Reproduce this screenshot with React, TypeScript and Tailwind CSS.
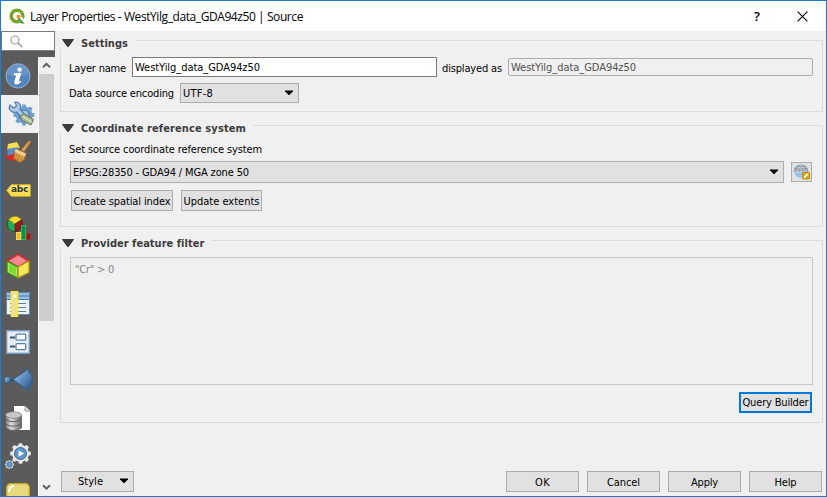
import { useLayoutEffect, useRef, useState } from 'react';
import type { ReactNode } from 'react';

/* One line of text, tracked so that it fills the given width. */
function Fit({ text, w, className = '' }: { text: string; w: number; className?: string }) {
  const ref = useRef<HTMLSpanElement>(null);
  const [spacing, setSpacing] = useState(0);
  useLayoutEffect(() => {
    if (ref.current) {
      const natural = ref.current.getBoundingClientRect().width;
      setSpacing((w - natural) / text.length);
    }
  }, []);
  return (
    <span ref={ref} className={'inline-block shrink-0 translate-y-px whitespace-pre ' + className} style={{ letterSpacing: spacing + 'px' }}>
      {text}
    </span>
  );
}

function Caret() {
  return (
    <svg width="8" height="5" viewBox="0 0 8 5" className="shrink-0 -translate-y-px">
      <path d="M0 0.5H8V1.3L4.4 5H3.6L0 1.3Z" fill="#000" />
    </svg>
  );
}

function Button({ text, w, className = '' }: { text: string; w: number; className?: string }) {
  return (
    <button className={'flex h-[21px] shrink-0 items-center justify-center border border-[#adadad] bg-[#e1e1e1] ' + className}>
      <Fit text={text} w={w} className="leading-[17px]" />
    </button>
  );
}

function Group({ title, w, className, children }: { title: string; w: number; className: string; children: ReactNode }) {
  return (
    <section className={'flex w-[763px] shrink-0 flex-col ' + className}>
      <div className="flex h-[9px]">
        <svg width="12" height="8" viewBox="0 0 12 8" className="-mt-px ml-[2px] shrink-0">
          <path d="M0.5 0.5H11.5L6.5 7.5H5.5Z" fill="#3c3c3c" stroke="#222" strokeWidth=".8" />
        </svg>
        <h2 className="-mt-[5px] ml-[7px] flex h-[16px] shrink-0 font-bold leading-[16px] text-[#3c3c3c]">
          <Fit text={title} w={w} />
        </h2>
        <div className="ml-[7px] flex-1 border-r border-t border-[#dcdcdc]" />
      </div>
      <div className="flex flex-1 flex-col border-x border-b border-[#dcdcdc]">{children}</div>
    </section>
  );
}

const toothAngles = [0, 45, 90, 135, 180, 225, 270, 315];

function Gear({ cx, cy, r, fill, tooth }: { cx: number; cy: number; r: number; fill: string; tooth: number }) {
  return (
    <g fill={fill}>
      <circle cx={cx} cy={cy} r={r} />
      {toothAngles.map((a) => (
        <rect key={a} x={cx - tooth / 2} y={cy - r - tooth / 2} width={tooth} height={tooth} rx=".7" transform={`rotate(${a} ${cx} ${cy})`} />
      ))}
    </g>
  );
}

function InfoIcon() {
  return (
    <svg width="26" height="26" viewBox="0 0 26 26">
      <circle cx="13" cy="13" r="12" fill="#5486bd" stroke="#94b5d8" strokeWidth="1" />
      <path d="M2 11A11 11 0 0 1 24 11Q13 16 2 11Z" fill="#7aa1cf" opacity=".55" />
      <circle cx="14.6" cy="6.6" r="2.2" fill="#fff" />
      <path d="M9 10.4L16.3 9.8L13.8 18.2Q13.6 19.4 16 17.6L16.4 18.6Q13.8 21.6 10.8 21.4Q8.6 20.8 9.4 18.2L11.1 12.4L8.8 12Z" fill="#fff" />
    </svg>
  );
}

function ToolsIcon() {
  return (
    <svg width="28" height="28" viewBox="0 0 28 28">
      <Gear cx={17} cy={15} r={8.4} fill="#6f9fd3" tooth={4} />
      <circle cx="17" cy="15" r="5" fill="#a9c8e6" stroke="#4777ab" />
      <path d="M3 5L6.5 8L9.5 6L8 2Q13 2 13.5 6.5L13 9.5L18 14.5L14.5 17.5L10 12Q4 13.5 2 8Z" fill="#aecae6" stroke="#4d7ba9" strokeWidth="1.1" />
      <path d="M13 16L17 13.5L26.5 19.5L24 25L15 20.5Z" fill="#a9b993" stroke="#5d7257" strokeWidth="1" />
      <path d="M16 16.5L24.5 22" stroke="#d5ddc4" strokeWidth="1.5" />
    </svg>
  );
}

function BrushIcon() {
  return (
    <svg width="28" height="28" viewBox="0 0 28 28">
      <path d="M4 6L13 4L16 10L3 12Z" fill="#f4df52" />
      <path d="M3 11L14 9L15 16L4 18Z" fill="#5c8cc3" />
      <path d="M2.5 18L13 15L15 23L6 22L2.5 20Z" fill="#e52420" />
      <path d="M17 12L24.5 3Q27.2 2 26.6 4.6L20 14Z" fill="#d6a260" stroke="#a56827" />
      <path d="M11.5 11L22 15.5L20 22L15.5 24.5L9.5 20Z" fill="#dca14c" stroke="#a7671f" />
      <path d="M11.5 11L22 15.5L21 18.5L10.8 14Z" fill="#efd19b" />
      <path d="M12.5 16L11.5 20M15 17.5L13.5 22M17.5 19L15.5 23.5" stroke="#a7671f" strokeWidth=".8" />
    </svg>
  );
}

function LabelIcon() {
  return (
    <div className="relative h-[13px] w-[25px]">
      <svg width="25" height="13" viewBox="0 0 25 13" className="block">
        <path d="M.6 6.5L5 1Q5.5.6 6 .6H24.4V12.4H6Q5.5 12.4 5 12Z" fill="#f7dc55" stroke="#c9a51c" />
        <path d="M2 6L5.5 1.6H23.4V5H6Z" fill="#fff1a0" opacity=".7" />
      </svg>
      <span className="absolute left-[5px] top-[-1px] font-['DejaVu_Sans'] text-[9px] font-bold leading-[13px] tracking-[-0.3px] text-[#30352c] [font-stretch:normal]">abc</span>
    </div>
  );
}

function DiagramIcon() {
  return (
    <svg width="26" height="26" viewBox="0 0 26 26">
      <circle cx="9" cy="9" r="7.6" fill="#24ad59" stroke="#166334" />
      <path d="M9 9L2.6 4.6Q9-2 15.4 4.6Z" fill="#f7dc28" stroke="#a4891b" strokeWidth=".7" />
      <path d="M9 9L15.6 5Q18.5 11 12 16L9 16.5Z" fill="#951a1c" stroke="#681012" strokeWidth=".7" />
      <rect x="10.5" y="17.5" width="4" height="7" fill="#f4b81d" stroke="#f9d559" />
      <rect x="15.5" y="10.5" width="4" height="14" fill="#128a43" stroke="#35b465" />
      <rect x="20.5" y="18.5" width="4" height="6" fill="#8e1a19" stroke="#b02a28" />
    </svg>
  );
}

function CubeIcon() {
  return (
    <svg width="24" height="26" viewBox="0 0 24 26" strokeLinejoin="round">
      <path d="M1 7.5L12 1L23 7.5L12 14Z" fill="#f28a90" stroke="#c92128" strokeWidth="1.2" />
      <path d="M1 8L12 14V25L1 19.5Z" fill="#80da35" stroke="#408d18" strokeWidth="1.3" />
      <path d="M23 8L12 14V25L23 19.5Z" fill="#f8e65b" stroke="#b49616" strokeWidth="1.3" />
      <path d="M2 8L12 2L22 8" fill="none" stroke="#d8333a" />
      <path d="M10.5 14.5V23L2.5 18.7V10" fill="none" stroke="#b4ee81" strokeWidth=".8" />
    </svg>
  );
}

function FieldsIcon() {
  return (
    <svg width="24" height="26" viewBox="0 0 24 26">
      <rect x=".5" y="1.5" width="23" height="22" fill="#eef3f7" stroke="#5d89b5" />
      <rect x="1" y="2" width="22" height="6" fill="#97bedf" />
      <path d="M1 5H23M1 8.5H23" stroke="#477ba9" />
      <path d="M4 12.5H20M4 16.5H20M4 20.5H20" stroke="#5f7ea0" strokeWidth="1.1" />
      <rect x="5.5" y=".8" width="6" height="24.4" fill="#eedf9e" stroke="#f8ec3d" strokeWidth="1.6" />
      <circle cx="8.5" cy="5" r="1.5" fill="#fff" />
    </svg>
  );
}

function FormIcon() {
  return (
    <svg width="24" height="24" viewBox="0 0 24 24">
      <rect x=".7" y=".7" width="22.6" height="22.6" fill="#e8edef" stroke="#739dc7" strokeWidth="1.4" />
      <path d="M4 7.5H9M4 16.5H9" stroke="#40586b" strokeWidth="2" />
      <rect x="10" y="4.2" width="9.7" height="6" rx="1" fill="#fff" stroke="#5682ad" strokeWidth="1.3" />
      <rect x="10" y="13.6" width="9.7" height="6" rx="1" fill="#fff" stroke="#5682ad" strokeWidth="1.3" />
    </svg>
  );
}

function JoinIcon() {
  return (
    <svg width="30" height="26" viewBox="0 0 30 26">
      <defs>
        <linearGradient id="join" x1="0" y1="0" x2="1" y2="1">
          <stop offset="0" stopColor="#b6d2ed" />
          <stop offset=".5" stopColor="#5c8bbb" />
          <stop offset="1" stopColor="#224c7d" />
        </linearGradient>
      </defs>
      <path d="M5 13H16" stroke="#254d79" strokeWidth="2" />
      <circle cx="3.7" cy="13" r="3.3" fill="url(#join)" stroke="#254d79" strokeWidth=".7" />
      <path d="M9 12.5L25 1.5Q23 6 28 7.5V18Q23 19 25 24.5Z" fill="url(#join)" stroke="#315d8e" />
    </svg>
  );
}

function StorageIcon() {
  return (
    <svg width="26" height="27" viewBox="0 0 26 27">
      <path d="M9 1H20L25 6V25H9Z" fill="#fff" />
      <path d="M20 1V6H25" fill="#ddd" stroke="#777" strokeWidth=".7" />
      <defs>
        <linearGradient id="disk" x1="0" x2="1">
          <stop offset="0" stopColor="#777" />
          <stop offset=".35" stopColor="#ddd" />
          <stop offset="1" stopColor="#666" />
        </linearGradient>
      </defs>
      <path d="M.5 10V23Q8 28 16.5 23V10Z" fill="url(#disk)" stroke="#555" strokeWidth=".7" />
      <path d="M.5 14.5Q8 19 16.5 14.5M.5 19Q8 23.5 16.5 19" fill="none" stroke="#5f5f5f" strokeWidth="1" />
      <ellipse cx="8.5" cy="10" rx="8" ry="3.2" fill="#c8c8c8" stroke="#777" strokeWidth=".7" />
    </svg>
  );
}

function ActionsIcon() {
  return (
    <svg width="28" height="28" viewBox="0 0 28 28">
      <Gear cx={16.5} cy={11.5} r={8.4} fill="#e7e7e5" tooth={3.8} />
      <circle cx="16.5" cy="11.5" r="6" fill="#5f93cb" stroke="#3e6592" />
      <path d="M14.5 8.3L20 11.5L14.5 14.7Z" fill="#fff" />
      <Gear cx={5.5} cy={22.5} r={3.6} fill="#cfd2d4" tooth={2} />
      <circle cx="5.5" cy="22.5" r="2.7" fill="#6999cc" stroke="#426b97" strokeWidth=".6" />
    </svg>
  );
}

function DisplayIcon() {
  return (
    <svg width="24" height="22" viewBox="0 0 24 22">
      <rect x=".7" y=".7" width="22.6" height="20" rx="4" fill="#e8d97d" stroke="#c4a81e" strokeWidth="1.3" />
      <path d="M3 9Q3 3 8 3" fill="none" stroke="#fff" strokeWidth="1.8" />
    </svg>
  );
}

const pages = [
  { name: 'info', icon: <InfoIcon />, pad: 'pl-[4px]' },
  { name: 'source', icon: <ToolsIcon />, pad: 'pl-[6px] bg-[#f0f0f0]' },
  { name: 'symbology', icon: <BrushIcon />, pad: 'pl-[3px]' },
  { name: 'labels', icon: <LabelIcon />, pad: 'pl-[5px]' },
  { name: 'diagrams', icon: <DiagramIcon />, pad: 'pl-[5px]' },
  { name: '3d', icon: <CubeIcon />, pad: 'pl-[5px]' },
  { name: 'fields', icon: <FieldsIcon />, pad: 'pl-[5px]' },
  { name: 'form', icon: <FormIcon />, pad: 'pl-[5px]' },
  { name: 'joins', icon: <JoinIcon />, pad: 'pl-[3px]' },
  { name: 'storage', icon: <StorageIcon />, pad: 'pl-[4px]' },
  { name: 'actions', icon: <ActionsIcon />, pad: 'pl-[3px]' },
  { name: 'display', icon: <DisplayIcon />, pad: 'pl-[5px]' },
];

function Chevron({ down = false }: { down?: boolean }) {
  return (
    <svg width="9" height="7" viewBox="0 0 9 7">
      <path d={down ? 'M1 1.2L4.5 4.7L8 1.2' : 'M1 5.3L4.5 1.8L8 5.3'} fill="none" stroke="#606060" strokeWidth="2" />
    </svg>
  );
}

function Sidebar() {
  return (
    <aside className="flex w-[54px] shrink-0 flex-col bg-[#5b5b5b]">
      <div className="flex h-[20px] shrink-0 items-center border border-[#7a7a7a] bg-white pl-[8px]">
        <svg width="13" height="13" viewBox="0 0 13 13">
          <circle cx="5" cy="5" r="4" fill="none" stroke="#999" strokeWidth="1.1" />
          <path d="M8 8L12.3 12.3" stroke="#999" strokeWidth="1.5" />
        </svg>
      </div>
      <div className="h-[6px] shrink-0" />
      <div className="flex min-h-0 flex-1">
        <nav className="w-[37px] shrink-0 overflow-hidden">
          {pages.map((p) => (
            <div key={p.name} className={'flex h-[38px] items-center ' + p.pad}>
              {p.icon}
            </div>
          ))}
        </nav>
        <div className="flex w-[17px] flex-col border-l border-white bg-[#f0f0f0]">
          <div className="flex h-[17px] w-[15px] shrink-0 items-center justify-center">
            <Chevron />
          </div>
          <div className="h-[247px] w-[15px] shrink-0 bg-[#cdcdcd]" />
          <div className="flex-1" />
          <div className="flex h-[17px] w-[15px] shrink-0 items-center justify-center">
            <Chevron down />
          </div>
        </div>
      </div>
    </aside>
  );
}

export default function App() {
  return (
    <div className="flex h-[497px] w-[827px] flex-col overflow-hidden border border-[#1a7dd0] bg-[#f0f0f0] font-['DejaVu_Sans_Condensed','DejaVu_Sans',sans-serif] text-[11px] text-black [font-stretch:condensed]">
      <header className="flex h-[30px] shrink-0 items-center bg-white pl-[8px]">
        <svg width="17" height="17" viewBox="0 0 17 17" className="shrink-0">
          <circle cx="8" cy="8" r="5.8" fill="none" stroke="#76a52b" strokeWidth="3.6" />
          <path d="M8 6.5L11 7L16 12.5V16H12.5L8 10.5Z" fill="#fff" />
          <path d="M9 8.4L15.7 15.4H12.3L9 12Z" fill="#4b9b3b" />
          <path d="M7.7 7H10.6L12 8.4L9 11L7.7 9.6Z" fill="#ee8b25" />
        </svg>
        <Fit text="Layer Properties - WestYilg_data_GDA94z50 | Source" w={273} className="ml-[4px] font-['Open_Sans'] text-[12px] leading-[18px] [font-stretch:normal]" />
        <div className="flex-1" />
        <span className="mr-[37px] font-['Open_Sans'] text-[13px] font-semibold leading-[18px] [font-stretch:normal]">?</span>
        <svg width="11" height="11" viewBox="0 0 11 11" className="mr-[18px]">
          <path d="M.6.6L10.4 10.4M10.4.6L.6 10.4" stroke="#000" strokeWidth="1.1" />
        </svg>
      </header>

      <div className="flex min-h-0 flex-1">
        <Sidebar />
        <main className="flex min-w-0 flex-1 flex-col pl-[5px] pt-[9px]">
          <Group title="Settings" w={47} className="h-[72px]">
            <div className="mt-[8px] flex h-[20px] items-center pl-[8px]">
              <div className="flex w-[63px] leading-[17px]">
                <Fit text="Layer name" w={57} />
              </div>
              <div className="flex h-[20px] w-[305px] items-center border border-[#7a7a7a] bg-white pl-[2px] pt-px">
                <Fit text="WestYilg_data_GDA94z50" w={125} />
              </div>
              <Fit text="displayed as" w={60} className="ml-[5px] leading-[17px]" />
              <div className="ml-[6px] flex h-[18px] w-[305px] items-center rounded-[2px] border border-[#adadad] pl-[2px] text-[#505050]">
                <Fit text="WestYilg_data_GDA94z50" w={125} />
              </div>
            </div>
            <div className="mt-[6px] flex h-[20px] items-center pl-[8px]">
              <div className="flex w-[111px] pt-px">
                <Fit text="Data source encoding" w={105} />
              </div>
              <div className="flex h-[20px] w-[119px] items-center justify-between border border-[#adadad] bg-[#e1e1e1] pl-[2px] pr-[5px]">
                <Fit text="UTF-8" w={30} />
                <Caret />
              </div>
            </div>
          </Group>

          <Group title="Coordinate reference system" w={165} className="mt-[13px] h-[102px]">
            <div className="mt-[7px] flex h-[16px] items-center pl-[8px]">
              <Fit text="Set source coordinate reference system" w={193} />
            </div>
            <div className="mt-[4px] flex h-[22px] items-center pl-[9px]">
              <div className="flex h-[22px] w-[714px] items-center justify-between border border-[#adadad] bg-[#e1e1e1] pl-[2px] pr-[5px]">
                <Fit text="EPSG:28350 - GDA94 / MGA zone 50" w={176} className="pt-px" />
                <Caret />
              </div>
              <button className="ml-[7px] flex h-[20px] w-[21px] items-center justify-center border border-[#adadad] bg-[#e1e1e1]">
                <svg width="17" height="16" viewBox="0 0 17 16">
                  <circle cx="8" cy="7.5" r="6.5" fill="#a5c9ed" />
                  <path d="M.5 8Q1 1 8 .5Q15 1 15.5 8Q8 5.5 .5 8Z" fill="#8b949d" />
                  <path d="M1 7Q8 3 15 7M3 3.5H13M8 .5V14M8 .5Q2 6 5 13M8 .5Q14 6 11 13" fill="none" stroke="#d3d8dc" strokeWidth=".6" />
                  <path d="M2 10H14M3 12H13" stroke="#7faedb" strokeWidth=".7" />
                  <rect x="9.5" y="8.5" width="7" height="6.5" rx=".8" fill="#d9aa15" stroke="#b98d09" />
                  <path d="M11 13.7L15 9.8" stroke="#fff" strokeWidth="1.8" />
                </svg>
              </button>
            </div>
            <div className="mt-[7px] flex gap-[8px] pl-[10px]">
              <Button text="Create spatial index" w={97} className="w-[102px]" />
              <Button text="Update extents" w={76} className="w-[81px]" />
            </div>
          </Group>

          <Group title="Provider feature filter" w={123} className="mt-[13px] h-[183px]">
            <div className="ml-[9px] mt-[8px] flex h-[128px] w-[743px] shrink-0 border border-[#c8c8c8] pl-[4px] pt-[2px] text-[#858585]">
              <Fit text={'"Cr" > 0'} w={39} className="h-[17px] leading-[17px]" />
            </div>
            <div className="mr-[10px] mt-[7px] flex justify-end">
              <button className="flex h-[21px] w-[73px] items-center justify-center border-2 border-[#0078d7] bg-[#e1e1e1]">
                <Fit text="Query Builder" w={66} />
              </button>
            </div>
          </Group>

          <footer className="mt-[48px] flex h-[21px] w-[762px] gap-[8px] pl-px">
            <button className="flex h-[21px] w-[73px] shrink-0 items-center border border-[#adadad] bg-[#e1e1e1] pl-[16px]">
              <Fit text="Style" w={25} />
              <span className="ml-[17px] flex">
                <Caret />
              </span>
            </button>
            <div className="flex-1" />
            <Button text="OK" w={15} className="w-[73px]" />
            <Button text="Cancel" w={33} className="w-[73px]" />
            <Button text="Apply" w={27} className="w-[73px]" />
            <Button text="Help" w={22} className="w-[73px]" />
          </footer>
        </main>
      </div>
    </div>
  );
}
